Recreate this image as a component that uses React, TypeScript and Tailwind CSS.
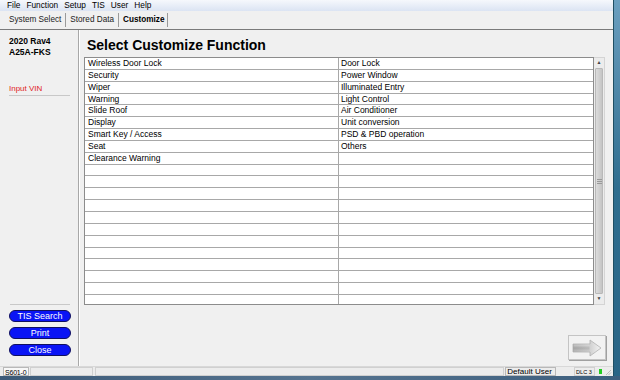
import React from "react";

const leftItems = [
  "Wireless Door Lock",
  "Security",
  "Wiper",
  "Warning",
  "Slide Roof",
  "Display",
  "Smart Key / Access",
  "Seat",
  "Clearance Warning",
];

const rightItems = [
  "Door Lock",
  "Power Window",
  "Illuminated Entry",
  "Light Control",
  "Air Conditioner",
  "Unit conversion",
  "PSD & PBD operation",
  "Others",
];

const ROWS = 22;

function SideButton({ label }: { label: string }) {
  return (
    <button className="w-[62px] h-[12px] rounded-full bg-[#0a14f5] border border-[#101060] text-white text-[9px] leading-[10px] flex items-center justify-center">
      {label}
    </button>
  );
}

export default function App() {
  const rows = Array.from({ length: ROWS }, (_, i) => i);

  return (
    <div
      className="w-[620px] h-[380px] flex flex-col overflow-hidden bg-[#f0f0f0] text-black"
      style={{ fontFamily: '"Liberation Sans", Arial, sans-serif' }}
    >
      <div className="flex flex-1 min-h-0">
        <div className="flex flex-col flex-1 min-w-0">
          {/* menu bar */}
          <div className="h-[11px] flex items-center gap-[6px] pl-[7px] text-[8.3px] leading-[11px] bg-gradient-to-b from-[#f6f8fc] to-[#dbe4f3]">
            <span>File</span>
            <span>Function</span>
            <span>Setup</span>
            <span>TIS</span>
            <span>User</span>
            <span>Help</span>
          </div>

          {/* tabs */}
          <div className="h-[19px] flex items-center text-[8.2px] border-b border-[#7a7a7a] bg-[#f0f0f0]">
            <span className="pl-[9px] pr-[4px] text-[#222]">System Select</span>
            <span className="w-px h-[14px] bg-[#9a9a9a]" />
            <span className="pl-[4px] pr-[4px] text-[#222]">Stored Data</span>
            <span className="w-px h-[14px] bg-[#9a9a9a]" />
            <span className="pl-[4px] pr-[3px] font-bold">Customize</span>
            <span className="w-px h-[14px] bg-[#9a9a9a]" />
          </div>

          {/* body */}
          <div className="flex flex-1 min-h-0">
            {/* left panel */}
            <div className="w-[79px] flex flex-col border-r border-[#a8a8a8] shadow-[1px_0_0_#ffffff]">
              <div className="pl-[9px] pt-[6px] text-[8.5px] leading-[11px] font-bold">
                <div>2020 Rav4</div>
                <div>A25A-FKS</div>
              </div>
              <div className="mt-[26px] ml-[9px] mr-[8px] border-b border-[#c8c8c8] pb-[1px] text-[8px] leading-[10px] text-[#e01c1c]">
                Input VIN
              </div>
              <div className="flex-1" />
              <div className="ml-[10px] mr-[8px] border-t border-[#c8c8c8]" />
              <div className="flex flex-col gap-[5px] pl-[9px] pt-[5px] pb-[10px]">
                <SideButton label="TIS Search" />
                <SideButton label="Print" />
                <SideButton label="Close" />
              </div>
            </div>

            {/* main panel */}
            <div className="flex-1 flex flex-col">
              <div className="pl-[8px] pt-[7px] h-[27px] text-[14px] leading-[17px] font-bold">
                Select Customize Function
              </div>
              <div className="flex ml-[5px] mr-[8px]">
                <div className="flex-1 h-[248px] overflow-hidden border border-[#8c8c8c] bg-white">
                  {rows.map((i) => (
                    <div
                      key={i}
                      className="grid grid-cols-[254px_1fr] h-[11.85px] border-b border-[#a8a8a8] text-[8.5px] leading-[10.85px]"
                    >
                      <div className="pl-[3px] border-r border-[#a8a8a8] whitespace-nowrap">
                        {leftItems[i] ?? ""}
                      </div>
                      <div className="pl-[2px] whitespace-nowrap">{rightItems[i] ?? ""}</div>
                    </div>
                  ))}
                </div>
                <div className="w-[11px] h-[248px] flex flex-col bg-[#ececec] border-y border-r border-[#d4d4d4]">
                  <div className="h-[10px] flex items-center justify-center text-[5px] text-[#444]">
                    ▲
                  </div>
                  <div className="flex-1 mx-[1px] rounded-[1px] bg-gradient-to-r from-[#dcdcdc] via-[#d0d0d0] to-[#c4c4c4] border border-[#b8b8b8] flex items-center justify-center">
                    <div className="flex flex-col gap-[1px]">
                      <div className="w-[5px] h-px bg-[#999]" />
                      <div className="w-[5px] h-px bg-[#999]" />
                      <div className="w-[5px] h-px bg-[#999]" />
                    </div>
                  </div>
                  <div className="h-[10px] flex items-center justify-center text-[5px] text-[#444]">
                    ▼
                  </div>
                </div>
              </div>
              <div className="flex-1" />
              <div className="flex justify-end pr-[7px] pb-[6px]">
                <div className="w-[38px] h-[25px] border border-[#c4c4c4] shadow-[1px_1px_0_#a0a0a0] bg-[#f2f2f2] flex items-center justify-center">
                  <svg width="30" height="18" viewBox="0 0 30 18">
                    <defs>
                      <linearGradient id="ag" x1="0" x2="0" y1="0" y2="1">
                        <stop offset="0" stopColor="#e8e8e8" />
                        <stop offset="0.5" stopColor="#a8a8a8" />
                        <stop offset="1" stopColor="#d0d0d0" />
                      </linearGradient>
                      <linearGradient id="ah" x1="0" x2="1" y1="0" y2="0">
                        <stop offset="0" stopColor="#9a9a9a" />
                        <stop offset="1" stopColor="#f4f4f4" />
                      </linearGradient>
                    </defs>
                    <path
                      d="M1 5 H18 V1 L29 9 L18 17 V13 H1 Z"
                      fill="url(#ah)"
                      stroke="#b0b0b0"
                      strokeWidth="0.8"
                    />
                    <rect x="1.5" y="5.5" width="16" height="7" fill="url(#ag)" opacity="0.6" />
                  </svg>
                </div>
              </div>
            </div>
          </div>

          {/* status bar */}
          <div className="h-[10px] flex items-stretch text-[7px] leading-[9px] border-t border-[#d8d8d8] bg-[#ececec]">
            <div className="ml-[3px] w-[26px] bg-[#f8f8f8] border border-[#b8b8b8] pl-px text-[7px] tracking-[-0.2px] whitespace-nowrap">
              S601-0
            </div>
            <div className="w-[63px] border border-[#d0d0d0] ml-px" />
            <div className="w-[411px] border border-[#d0d0d0] ml-[2px]" />
            <div className="w-[51px] border border-[#b8b8b8] ml-px pl-[1px] text-[8px] leading-[8px]">Default User</div>
            <div className="w-[18px]" />
            <div className="w-[21px] border border-[#d0d0d0] pl-[1px] text-[5.5px] leading-[8px]">DLC 3</div>
            <div className="w-[10px] flex items-center justify-center">
              <div className="w-[3px] h-[5px] bg-[#22cc22]" />
            </div>
            <div className="flex-1 flex items-end justify-end pr-[1px]">
              <svg width="7" height="7" viewBox="0 0 7 7">
                <path d="M6 1 L1 6 M6 3.5 L3.5 6" stroke="#b0b0b0" strokeWidth="0.8" />
              </svg>
            </div>
          </div>
        </div>

        {/* window border */}
        <div className="w-[7px] flex">
          <div className="w-px bg-[#1f4f63]" />
          <div className="flex-1 bg-gradient-to-b from-[#6b9fbf] via-[#2f6e8f] to-[#2a6586]" />
        </div>
      </div>

      {/* taskbar strip */}
      <div className="h-[4px] bg-gradient-to-r from-[#3c5a78] via-[#55738f] to-[#3d5f7e]" />
    </div>
  );
}
